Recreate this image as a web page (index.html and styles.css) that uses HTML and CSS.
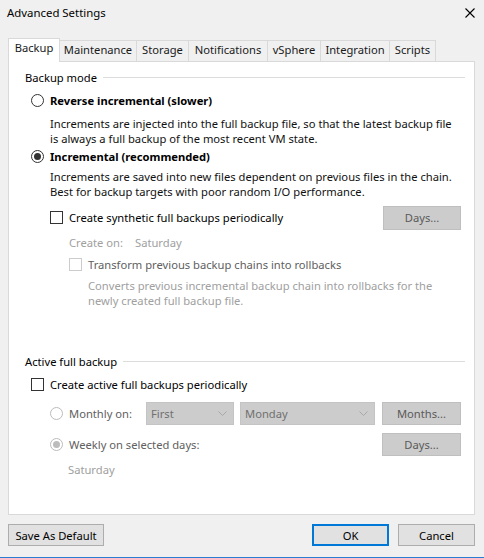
FILE: index.html
```html
<!DOCTYPE html>
<html>
<head>
<meta charset="utf-8">
<link rel="stylesheet" href="styles.css">
</head>
<body>
<div class="window">
  <div class="titlebar">
    <span class="title">Advanced Settings</span>
    <svg class="close" width="10" height="10" viewBox="0 0 10 10"><path d="M0.5 0.5 L9.5 9.5 M9.5 0.5 L0.5 9.5" stroke="#000" stroke-width="1.1" fill="none"/></svg>
  </div>
  <div class="tabs">
    <div class="tab active">Backup</div>
    <div class="tab w-maint">Maintenance</div>
    <div class="tab w-stor">Storage</div>
    <div class="tab w-notif">Notifications</div>
    <div class="tab w-vs">vSphere</div>
    <div class="tab w-int">Integration</div>
    <div class="tab w-scr">Scripts</div>
  </div>
  <div class="panel">
    <div class="legend l1"><span>Backup mode</span><i class="rule"></i></div>
    <div class="row radio-row r1"><span class="radio"></span><span class="bold">Reverse incremental (slower)</span></div>
    <div class="desc d1">Increments are injected into the full backup file, so that the latest backup file<br>is always a full backup of the most recent VM state.</div>
    <div class="row radio-row r2"><span class="radio checked"></span><span class="bold">Incremental (recommended)</span></div>
    <div class="desc d2">Increments are saved into new files dependent on previous files in the chain.<br>Best for backup targets with poor random I/O performance.</div>
    <div class="row synth"><span class="check"></span><span class="lbl">Create synthetic full backups periodically</span><span class="spacer"></span><span class="btn dis days1">Days...</span></div>
    <div class="row createon"><span class="muted">Create on:</span><span class="muted sat1">Saturday</span></div>
    <div class="row transform"><span class="check dis"></span><span class="lbl gray">Transform previous backup chains into rollbacks</span></div>
    <div class="desc converts muted">Converts previous incremental backup chain into rollbacks for the<br>newly created full backup file.</div>

    <div class="legend l2"><span>Active full backup</span><i class="rule"></i></div>
    <div class="row active-cb"><span class="check"></span><span class="lbl">Create active full backups periodically</span></div>
    <div class="row monthly"><span class="radio dis"></span><span class="lbl gray mlabel">Monthly on:</span><span class="combo c1">First<svg width="9" height="5" viewBox="0 0 9 5"><path d="M0.5 0.5 L4.5 4.5 L8.5 0.5" stroke="#a8a8a8" fill="none"/></svg></span><span class="combo c2">Monday<svg width="9" height="5" viewBox="0 0 9 5"><path d="M0.5 0.5 L4.5 4.5 L8.5 0.5" stroke="#a8a8a8" fill="none"/></svg></span><span class="btn dis months">Months...</span></div>
    <div class="row weekly"><span class="radio dis checked"></span><span class="lbl gray">Weekly on selected days:</span><span class="spacer"></span><span class="btn dis days2">Days...</span></div>
    <div class="row saturday"><span class="muted">Saturday</span></div>
  </div>
  <div class="footer">
    <span class="btn save">Save As Default</span>
    <span class="spacer"></span>
    <span class="btn ok">OK</span>
    <span class="btn cancel">Cancel</span>
  </div>
  <div class="edge"></div>
</div>
</body>
</html>
```
FILE: styles.css
```css
* { box-sizing: border-box; }
html, body { margin: 0; padding: 0; }
body {
  width: 484px;
  height: 558px;
  overflow: hidden;
  background: #f0f0f0;
  font-family: "Noto Sans", "Open Sans", sans-serif;
  font-size: 11.2px;
  color: #000;
}
.window { width: 484px; height: 558px; display: flex; flex-direction: column; }
.titlebar {
  height: 26px;
  display: flex;
  align-items: center;
  padding: 0 7px 0 7px;
  font-size: 11.4px;
}
.title { flex: 1; }
.close { margin-right: 2px; }
.tabs {
  margin: 11px 0 0 8px;
  height: 24px;
  display: flex;
  align-items: flex-end;
}
.tab {
  height: 21px;
  border: 1px solid #d9d9d9;
  border-bottom: none;
  border-left: none;
  display: flex;
  align-items: center;
  justify-content: center;
  background: #f0f0f0;
  color: #1a1a1a;
  padding-bottom: 2px;
}
.tab.active {
  height: 24px;
  width: 52px;
  background: #fff;
  border-left: 1px solid #d9d9d9;
  margin-bottom: -1px;
  position: relative;
  z-index: 1;
  padding-bottom: 5px;
}
.w-maint { width: 77px; }
.w-stor { width: 52px; }
.w-notif { width: 79px; }
.w-vs { width: 53px; }
.w-int { width: 69px; }
.w-scr { width: 46px; }
.panel {
  margin: 0 9px 0 8px;
  height: 455px;
  background: #fff;
  border: 1px solid #d9d9d9;
  padding: 0 9px 0 16px;
}
.legend {
  display: flex;
  align-items: center;
  height: 16px;
}
.legend .rule { flex: 1; height: 1px; background: #dcdcdc; margin-left: 6px; }
.l1 { margin-top: 8px; }
.l2 { margin-top: 46px; }
.row { display: flex; align-items: center; }
.radio-row { padding-left: 6px; }
.r1 { height: 30px; }
.r2 { height: 22px; }
.bold { font-weight: bold; margin-left: 6px; }
.desc { line-height: 15px; padding-left: 25px; color: #111; }
.d2 { margin-top: 1px; }
.radio {
  width: 13px; height: 13px;
  border: 1px solid #333;
  border-radius: 50%;
  background: #fff;
  display: flex; align-items: center; justify-content: center;
  flex: none;
}
.radio.checked::after {
  content: "";
  width: 7px; height: 7px; border-radius: 50%;
  background: #333;
}
.radio.dis { border-color: #bcbcbc; }
.radio.dis.checked::after { background: #bcbcbc; }
.check {
  width: 13px; height: 13px;
  border: 1px solid #333;
  background: #fff;
  flex: none;
}
.check.dis { border-color: #cccccc; }
.lbl { margin-left: 6px; }
.gray { color: #606060; }
.muted { color: #a0a0a0; }
.spacer { flex: 1; }
.synth { margin-top: 7px; height: 24px; padding-left: 25px; padding-right: 4px; }
.createon { height: 26px; padding-left: 44px; }
.sat1 { margin-left: 12px; }
.transform { height: 18px; padding-left: 44px; }
.converts { margin-top: 4px; padding-left: 63px; }
.active-cb { margin-top: 6px; height: 18px; padding-left: 6px; }
.monthly { margin-top: 8px; height: 23px; padding-left: 25px; padding-right: 4px; }
.mlabel { width: 77px; }
.weekly { margin-top: 8px; height: 23px; padding-left: 25px; padding-right: 4px; }
.saturday { margin-top: 5px; height: 18px; padding-left: 43px; }
.btn {
  display: flex; align-items: center; justify-content: center;
  border: 1px solid #adadad;
  background: #e1e1e1;
  color: #000;
  flex: none;
}
.btn.dis { background: #cccccc; border-color: #bfbfbf; color: #5a5a5a; }
.days1 { width: 78px; height: 24px; }
.days2 { width: 79px; height: 23px; }
.months { width: 79px; height: 23px; margin-left: 7px; }
.combo {
  display: flex; align-items: center; justify-content: space-between;
  background: #cccccc;
  border: 1px solid #c4c4c4;
  color: #707070;
  height: 23px;
  padding: 0 6px 0 4px;
  flex: none;
}
.c1 { width: 88px; }
.c2 { width: 135px; margin-left: 6px; }
.footer {
  margin-top: 9px;
  height: 22px;
  display: flex;
  padding: 0 9px 0 8px;
}
.save { width: 96px; height: 22px; }
.ok { width: 77px; height: 22px; border: 2px solid #0078d7; }
.cancel { width: 77px; height: 22px; margin-left: 9px; }
.edge { margin-top: 11px; height: 1px; background: #2b7bd1; }
```
